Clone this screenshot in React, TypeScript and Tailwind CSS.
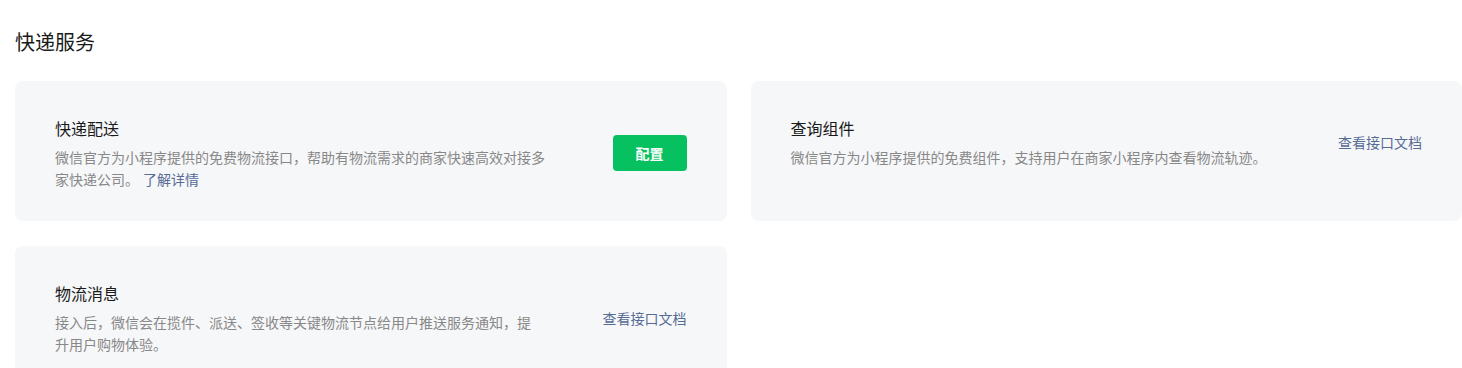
import React from "react";

const font = { fontFamily: '"Noto Sans CJK SC", "Noto Sans", sans-serif' };

function Card({
  title,
  desc,
  action,
}: {
  title: string;
  desc: React.ReactNode;
  action: React.ReactNode;
}) {
  return (
    <div className="bg-[#f6f7f9] rounded-lg min-h-[140px] pl-10 pr-10 pt-[35px] pb-[31px]">
      <div className="flex items-center">
        <div className="flex-1 mr-[60px]">
          <div className="text-[16px] leading-[24px] text-[#1a1a1a]">{title}</div>
          <div className="mt-[6px] text-[14px] leading-[22px] text-[#888888]">{desc}</div>
        </div>
        {action}
      </div>
    </div>
  );
}

export default function App() {
  const link = (
    <a className="text-[14px] leading-[22px] text-[#576b95] cursor-pointer whitespace-nowrap">查看接口文档</a>
  );
  return (
    <div className="bg-white w-[1462px] h-[368px] overflow-hidden pl-[15px]" style={font}>
      <h2 className="pt-[28px] text-[20px] leading-[28px] text-[#1a1a1a] font-normal">快递服务</h2>
      <div className="mt-[25px] grid grid-cols-2 gap-x-6 gap-y-[25px]">
        <Card
          title="快递配送"
          desc={
            <>
              微信官方为小程序提供的免费物流接口，帮助有物流需求的商家快速高效对接多家快递公司。
              <a className="ml-1 text-[#576b95] cursor-pointer">了解详情</a>
            </>
          }
          action={
            <button className="w-[74px] h-[36px] rounded bg-[#07c160] text-white text-[14px] font-bold">
              配置
            </button>
          }
        />
        <Card
          title="查询组件"
          desc="微信官方为小程序提供的免费组件，支持用户在商家小程序内查看物流轨迹。"
          action={link}
        />
        <Card
          title="物流消息"
          desc="接入后，微信会在揽件、派送、签收等关键物流节点给用户推送服务通知，提升用户购物体验。"
          action={link}
        />
      </div>
    </div>
  );
}
